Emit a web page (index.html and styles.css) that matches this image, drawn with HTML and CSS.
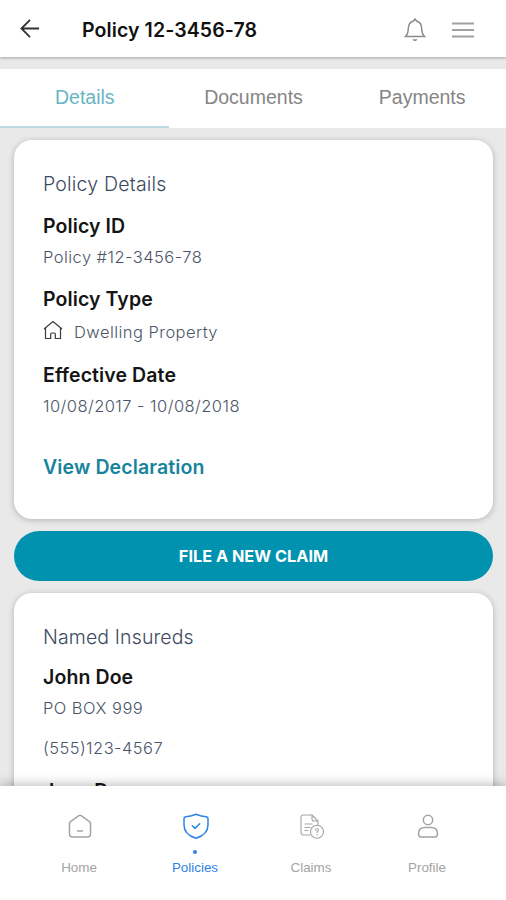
FILE: index.html
```html
<!DOCTYPE html>
<html lang="en">
<head>
<meta charset="utf-8">
<title>Policy 12-3456-78</title>
<link rel="stylesheet" href="styles.css">
</head>
<body>
<div class="app">
  <header class="topbar">
    <svg class="back" viewBox="0 0 22 22"><path d="M20 11H2M10.5 2 1.5 11l9 9"/></svg>
    <h1 class="title">Policy 12-3456-78</h1>
    <svg class="bell" viewBox="0 0 22 24"><path d="M1.5 18.5h19c-2-2-2.7-3.300-2.700-6.500 0-5-2-8.300-5.300-9L11 1 9.500 3C6.200 3.700 4.200 7 4.200 12c0 3.200-.7 4.500-2.700 6.500z"/><path class="clapper" d="M8.500 21.200h5c-.5 1.200-1.400 1.800-2.500 1.800s-2-.6-2.500-1.800z"/></svg>
    <svg class="menu" viewBox="0 0 22 16"><path d="M0 1.500h22M0 8h22M0 14.500h22"/></svg>
  </header>
  <nav class="tabs">
    <a class="tab tab-active">Details</a>
    <a class="tab">Documents</a>
    <a class="tab">Payments</a>
  </nav>
  <main class="content">
    <section class="card details">
      <h2 class="heading">Policy Details</h2>
      <h3 class="label">Policy ID</h3>
      <p class="value">Policy #12-3456-78</p>
      <h3 class="label policy-type">Policy Type</h3>
      <p class="value type"><svg class="house" viewBox="0 0 20 20"><path d="M1 9 10 1.500 19 9M2.500 8v10.500h5.200v-4.500q0-1 1-1h2.600q1 0 1 1v4.500h5.200V8"/></svg>Dwelling Property</p>
      <h3 class="label">Effective Date</h3>
      <p class="value">10/08/2017 - 10/08/2018</p>
      <a class="link">View Declaration</a>
    </section>
    <button class="claim">FILE A NEW CLAIM</button>
    <section class="card insureds">
      <h2 class="heading">Named Insureds</h2>
      <h3 class="label">John Doe</h3>
      <p class="value">PO BOX 999</p>
      <p class="value phone">(555)123-4567</p>
      <h3 class="label next">Jane Doe</h3>
    </section>
  </main>
  <footer class="bottombar">
    <a class="item"><svg class="icon" viewBox="0 0 26 26"><path d="M2.500 10.500q0-1.200 1-1.900L11.900 2.700q1.100-.8 2.200 0l8.400 5.900q1 .7 1 1.900V21q0 3-3 3h-15q-3 0-3-3zM10.500 18h5"/></svg><i class="dot"></i><span>Home</span></a>
    <a class="item item-active"><svg class="icon" viewBox="0 0 26 26"><path d="M13 1.300 Q7.500 3.500 2.800 3.800 Q1 4 1 5.800V12c0 6.500 5 11 12 13.300C20 23 25 18.500 25 12V5.800Q25 4 23.200 3.800 18.500 3.500 13 1.300zM9.300 12.800l2.700 2.600 4.700-4.700"/></svg><i class="dot"></i><span>Policies</span></a>
    <a class="item claims"><svg class="icon" viewBox="0 0 26 26"><path d="M11 22H4.500Q2 22 2 19.500v-15Q2 2 4.500 2H13l6 6v4M13 2v4q0 2 2 2h4M6 11h7M6 14.500h5M6 17.500h3"/><circle cx="18" cy="18.800" r="6.500"/><path d="M16.500 17.300q0-1.500 1.500-1.500t1.500 1.300-1.500 1.700v.7M18 21.500v.6"/></svg><i class="dot"></i><span>Claims</span></a>
    <a class="item"><svg class="icon" viewBox="0 0 26 26"><circle cx="13" cy="7" r="4.700"/><path d="M3.500 21q0-6.500 6-6.500h7q6 0 6 6.500 0 3-2.500 3H6q-2.500 0-2.500-3z"/></svg><i class="dot"></i><span>Profile</span></a>
  </footer>
</div>
</body>
</html>
```

FILE: styles.css
```css
* { box-sizing: border-box; }
body { margin: 0; font-family: Inter, "Liberation Sans", sans-serif; }
h1, h2, h3, p { margin: 0; white-space: nowrap; }
svg { display: block; fill: none; stroke: currentColor; flex: none; }
.app { width: 506px; height: 900px; display: flex; flex-direction: column; overflow: hidden; background: #e9e9e9; }
.topbar { height: 57px; flex: none; display: flex; align-items: center; padding: 3px 32px 0 20px; background: #fff; box-shadow: 0 1px 3px rgba(0,0,0,.3); }
.back { width: 21px; height: 21px; margin-top: -4px; color: #333; stroke-width: 1.900; }
.title { flex: 1; margin-left: 41px; font-size: 19.5px; line-height: 24px; font-weight: 600; letter-spacing: .1px; color: #111; }
.bell { width: 22px; height: 24px; color: #8c8c8c; stroke-width: 1.500; }
.clapper { fill: currentColor; stroke: none; }
.menu { width: 22px; height: 16px; margin-left: 26px; color: #a0a0a0; stroke-width: 1.800; }
.tabs { height: 59px; flex: none; margin-top: 12px; display: grid; grid-template-columns: repeat(3, 1fr); background: #fff; }
.tab { display: flex; align-items: center; justify-content: center; padding: 0 0 2px 1px; font: 19.5px/24px "Liberation Sans", sans-serif; color: #858585; border-bottom: 2px solid transparent; }
.tab-active { color: #69b5c3; border-bottom-color: #bfdbe2; }
.content { flex: 1; min-height: 0; overflow: hidden; padding: 12px 13px 0 14px; display: flex; flex-direction: column; }
.card { flex: none; padding: 32px 29px; border-radius: 18px; background: #fff; box-shadow: 0 1px 6px rgba(0,0,0,.24); }
.details { height: 379px; }
.heading { font-size: 19.5px; line-height: 24px; font-weight: 300; letter-spacing: .2px; color: #3c4961; }
.label { margin-top: 18px; font-size: 19.5px; line-height: 24px; font-weight: 600; letter-spacing: .1px; color: #151515; }
.value { margin-top: 8px; font-size: 16.500px; line-height: 22px; font-weight: 300; letter-spacing: .45px; color: #4c5568; }
.policy-type { margin-top: 19px; }
.type { display: flex; align-items: center; gap: 11px; margin-top: 10px; }
.type + .label { margin-top: 20px; }
.house { width: 20px; height: 20px; margin-top: -5px; color: #3b3b3b; stroke-width: 1.200; }
.link { display: block; margin-top: 38px; font-size: 19.5px; line-height: 24px; font-weight: 600; letter-spacing: .12px; color: #16849c; }
.claim { flex: none; height: 50px; margin: 12px 0; padding: 0; border: 0; border-radius: 25px; background: #0092ae; color: #fff; font: 700 16.300px/22px Inter, sans-serif; }
.insureds { height: 280px; }
.insureds .heading { letter-spacing: .13px; }
.insureds .heading + .label { margin-top: 16px; }
.phone { margin-top: 18px; }
.insureds .next { margin-top: 20px; }
.bottombar { position: relative; height: 114px; flex: none; display: flex; justify-content: center; padding: 27px 0 0 0; background: #fff; box-shadow: 0 -2px 10px rgba(0,0,0,.25); }
.item { width: 116px; display: flex; flex-direction: column; align-items: center; color: #a4a4a4; font: 13.400px/18px "Liberation Sans", sans-serif; }
.icon { width: 26px; height: 26px; margin-left: 1px; stroke-width: 1.500; stroke-linejoin: round; stroke-linecap: round; }
.claims .icon { stroke-width: 1.100; }
.dot { width: 4px; height: 4px; margin: 11px 0 5px; border-radius: 50%; }
.item-active { color: #2b83e8; }
.item-active .dot { background: currentColor; }
```
